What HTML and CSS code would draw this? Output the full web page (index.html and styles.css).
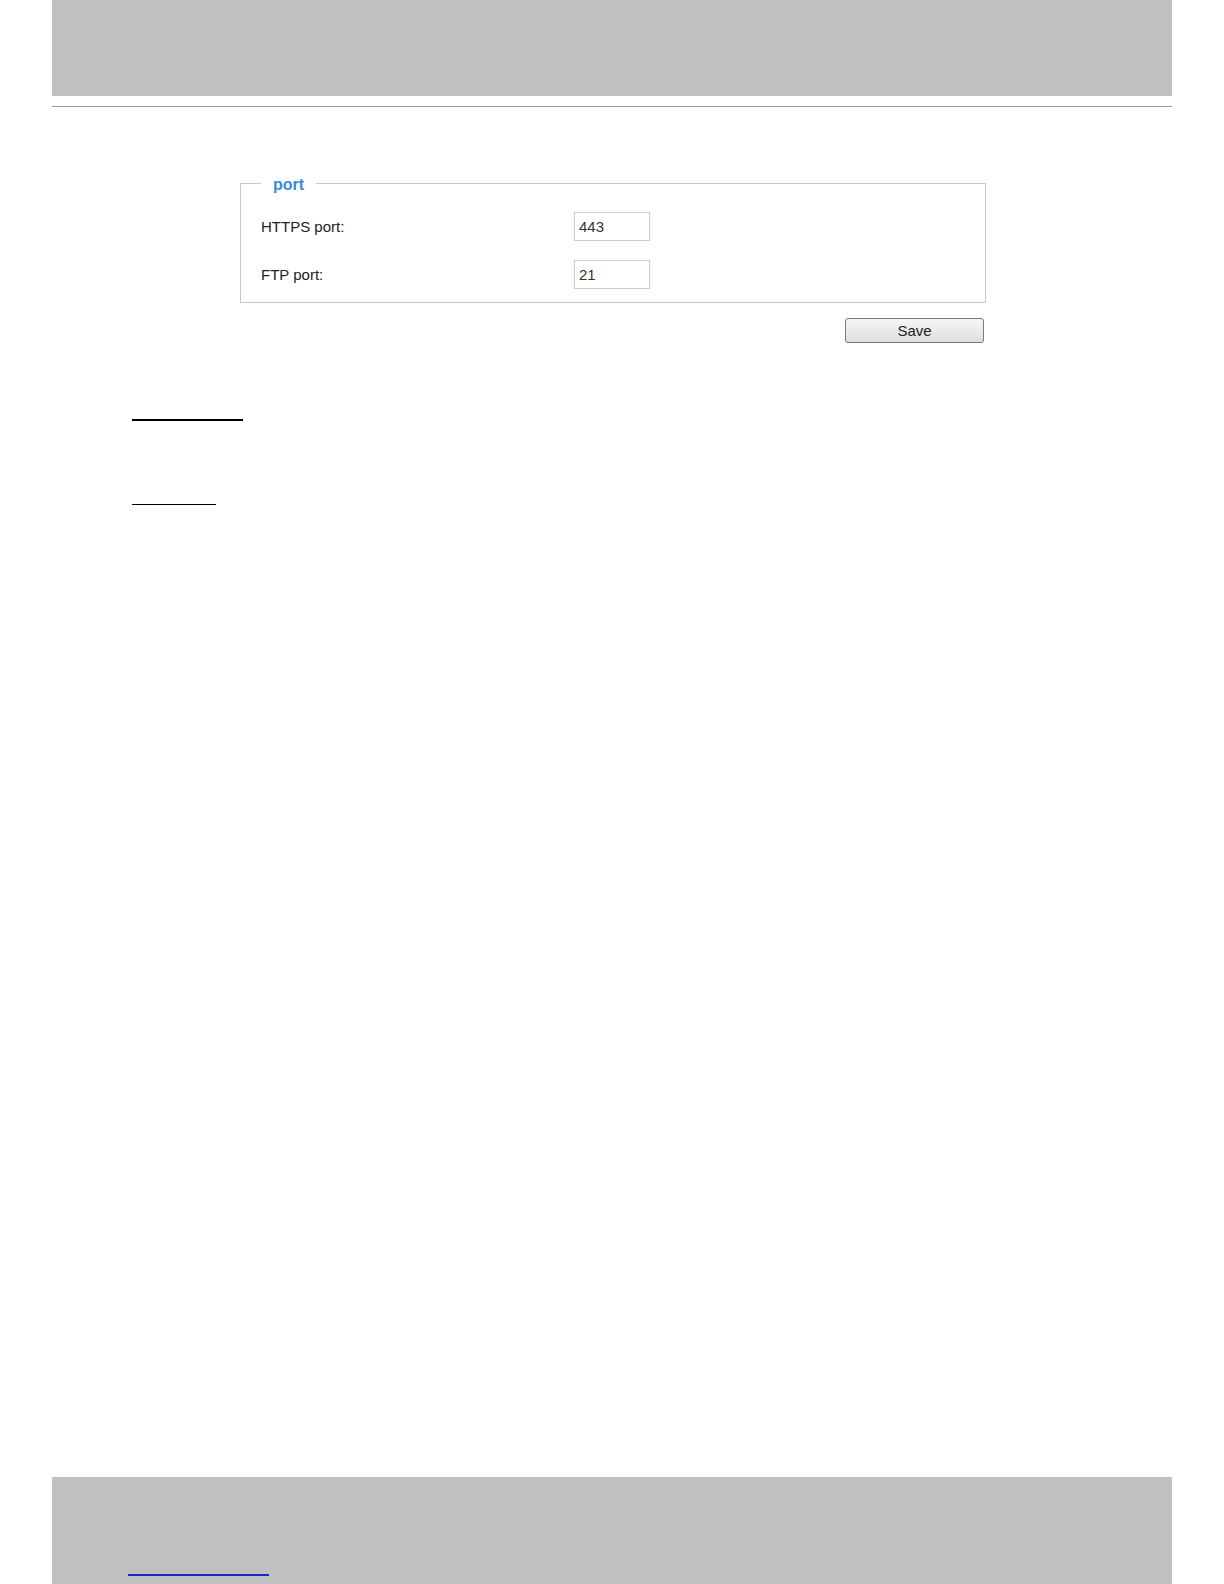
FILE: index.html
```html
<!DOCTYPE html>
<html lang="en">
<head>
  <meta charset="UTF-8">
  <title>Port settings</title>
  <link rel="stylesheet" href="styles.css">
</head>
<body>
  <div class="page-header"></div>
  <div class="page-rule"></div>

  <div class="content">
    <form class="port-form" onsubmit="return false;">
      <fieldset class="port-box">
        <legend>port</legend>
        <div class="field-row">
          <label for="httpsPort">HTTPS port:</label>
          <input type="text" id="httpsPort" value="443">
        </div>
        <div class="field-row">
          <label for="ftpPort">FTP port:</label>
          <input type="text" id="ftpPort" value="21">
        </div>
      </fieldset>
      <div class="form-actions">
        <button type="submit" class="save-btn">Save</button>
      </div>
    </form>
  </div>

  <div class="notes">
    <div class="note-line thick"></div>
    <div class="note-line thin"></div>
  </div>

  <div class="page-footer">
    <span class="footer-link"></span>
  </div>
</body>
</html>
```

FILE: styles.css
```css
html, body {
  margin: 0;
  padding: 0;
}

body {
  font-family: "Liberation Sans", Arial, sans-serif;
  background: #fff;
  color: #222;
  min-height: 100vh;
  display: flex;
  flex-direction: column;
}

.page-header {
  margin: 0 52px;
  height: 96px;
  background: #c0c0c0;
}

.page-rule {
  margin: 10px 52px 0;
  border-top: 1px solid #999;
}

.content {
  margin: 65px 0 0 240px;
  width: 746px;
}

.port-box {
  margin: 0;
  padding: 18px 20px 13px;
  border: 1px solid #c8c8c8;
}

.port-box legend {
  padding: 4px 12px 0;
  font-size: 16px;
  line-height: 18px;
  font-weight: bold;
  color: #3a8ad4;
}

.field-row {
  display: grid;
  grid-template-columns: 313px 76px;
  align-items: center;
  height: 29px;
}

.field-row + .field-row {
  margin-top: 19px;
}

.field-row label {
  font-size: 15px;
  color: #222;
}

.field-row input {
  box-sizing: border-box;
  width: 76px;
  height: 29px;
  margin: 0;
  padding: 0 4px;
  border: 1px solid #cccccc;
  font-family: "Liberation Sans", Arial, sans-serif;
  font-size: 15px;
  color: #333;
}

.form-actions {
  margin-top: 15px;
  padding-right: 2px;
  display: flex;
  justify-content: flex-end;
}

.save-btn {
  box-sizing: border-box;
  width: 139px;
  height: 25px;
  padding: 0;
  border: 1px solid #7a7a7a;
  border-radius: 3px;
  background: linear-gradient(#f6f6f6, #dedede);
  font-family: "Liberation Sans", Arial, sans-serif;
  font-size: 15px;
  color: #222;
}

.notes {
  margin: 76px 0 0 132px;
}

.note-line.thick {
  width: 111px;
  border-bottom: 2px solid #000;
}

.note-line.thin {
  width: 84px;
  margin-top: 83px;
  border-bottom: 1px solid #000;
}

.page-footer {
  margin: auto 52px 0;
  height: 107px;
  background: #c0c0c0;
  display: flex;
  align-items: flex-end;
}

.footer-link {
  display: block;
  width: 141px;
  margin: 0 0 8px 76px;
  border-bottom: 2px solid #2222cc;
}
```
